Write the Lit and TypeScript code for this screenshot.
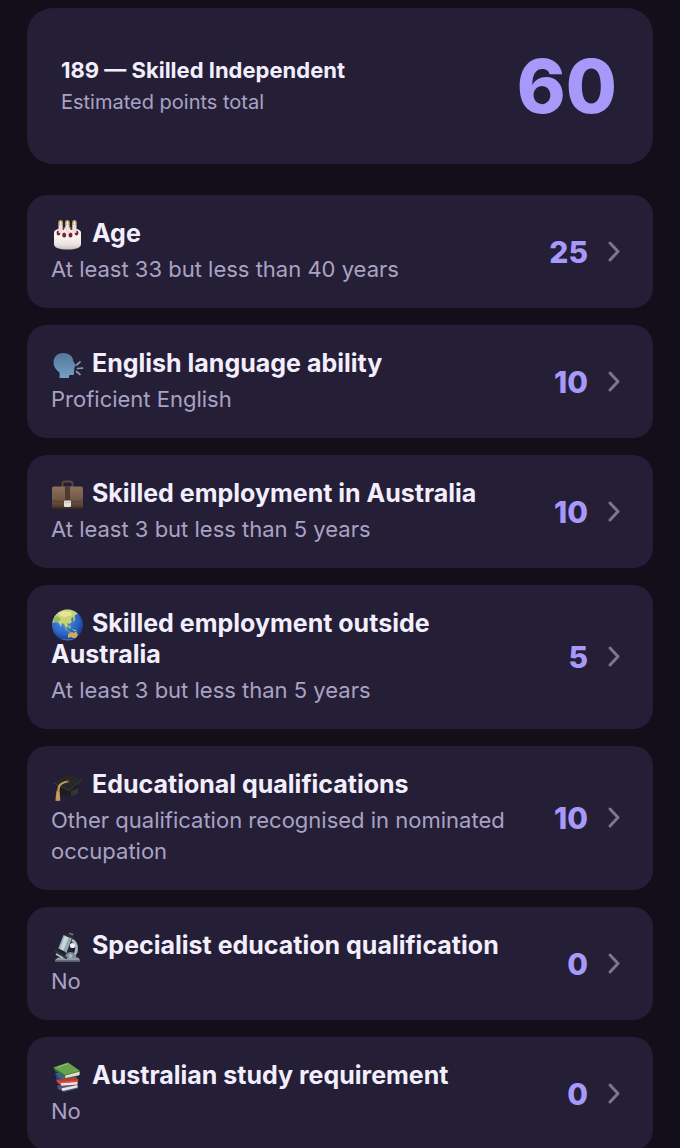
import { LitElement, html, css, svg } from "lit";
import type { SVGTemplateResult } from "lit";
import { customElement } from "lit/decorators.js";

interface Factor {
  icon: SVGTemplateResult;
  title: string;
  value: string;
  points: number;
}

const cake = svg`
  <defs>
    <linearGradient id="icing" x1="0" y1="0" x2="0" y2="1">
      <stop offset="0" stop-color="#fffdfb" /><stop offset="0.700" stop-color="#ebe5e0" /><stop offset="1" stop-color="#c9c0b8" />
    </linearGradient>
  </defs>
  <path d="M3 13v12c0 4 5.500 5.500 13.500 5.500S30 29 30 25V13z" fill="url(#icing)" />
  <ellipse cx="16.500" cy="13.500" rx="13.500" ry="5" fill="#f5eeea" />
  <g fill="#7a1f35">
    <circle cx="11.800" cy="9.500" r="1.600" /><circle cx="20.700" cy="9.500" r="1.600" />
    <ellipse cx="7.500" cy="14" rx="1.900" ry="2.400" /><ellipse cx="13.200" cy="16" rx="2" ry="2.500" />
    <ellipse cx="19.500" cy="16" rx="2" ry="2.500" /><ellipse cx="25.500" cy="14" rx="1.900" ry="2.400" />
  </g>
  <g fill="#ecdfd4"><rect x="7.500" y="3" width="4.200" height="11" rx="1" /><rect x="14.300" y="3" width="4.200" height="12" rx="1" /><rect x="21.300" y="3" width="4.200" height="11" rx="1" /></g>
  <g fill="#a89560"><rect x="7.300" y="1" width="4.600" height="5" rx="2" /><rect x="14.100" y="1" width="4.600" height="5" rx="2" /><rect x="21.100" y="1" width="4.600" height="5" rx="2" /></g>
  <g fill="#fff3b8"><ellipse cx="9.600" cy="4" rx="1.100" ry="2" /><ellipse cx="16.400" cy="4" rx="1.100" ry="2" /><ellipse cx="23.400" cy="4" rx="1.100" ry="2" /></g>`;

const speaking = svg`
  <defs>
    <linearGradient id="head" x1="0" y1="0" x2="0" y2="1">
      <stop offset="0" stop-color="#56779d" /><stop offset="1" stop-color="#759fc4" />
    </linearGradient>
  </defs>
  <path d="M12 4C6.500 4 2.500 8 2.500 13.500c0 4 2 7 5.500 9.500.8 1.200.8 3.500.5 6H18c0-1.500 0-2.500.7-3h2.800c1.500 0 2-1 1.600-2.500l-.3-1.300.9-1-.9-1.200 1.100-1-.5-1.300c1.400-.3 1.700-1 1-2l-2.200-3.700C22 7 18 4 12 4z" fill="url(#head)" />
  <g stroke="#8597ae" stroke-width="1.700" stroke-linecap="round"><path d="M25.500 16l3.500-3" /><path d="M26.500 19.500l5-.3" /><path d="M25.500 22.500l3.500 3" /></g>`;

const briefcase = svg`
  <defs>
    <linearGradient id="leather" x1="0" y1="0" x2="0" y2="1">
      <stop offset="0" stop-color="#8a705d" /><stop offset="0.550" stop-color="#745a47" /><stop offset="1" stop-color="#49362a" />
    </linearGradient>
  </defs>
  <path d="M11.500 8V4.500Q11.500 2.500 14 2.500h5q2.500 0 2.500 2V8" fill="none" stroke="#604839" stroke-width="1.800" />
  <rect x="1" y="7.500" width="31" height="22" rx="2" fill="url(#leather)" />
  <path d="M1.500 21.500q6 1.500 12 1.500h6q6 0 12-1.500" fill="none" stroke="#513b2d" stroke-width="0.800" />
  <rect x="14" y="7.500" width="5" height="15" fill="#513a2b" />
  <rect x="13" y="21.500" width="7" height="6.500" rx="1" fill="#e6dfd9" />
  <path d="M13.500 23.500h6" stroke="#c4b8ae" stroke-width="0.800" />
  <path d="M2 29h29" stroke="#34251d" />`;

const globe = svg`
  <defs>
    <radialGradient id="ocean" cx="0.400" cy="0.350" r="0.700">
      <stop offset="0" stop-color="#4f9be0" /><stop offset="0.650" stop-color="#2a62c5" /><stop offset="1" stop-color="#173280" />
    </radialGradient>
    <clipPath id="sphere"><circle cx="16.500" cy="16" r="15.500" /></clipPath>
  </defs>
  <circle cx="16.500" cy="16" r="15.500" fill="url(#ocean)" />
  <g clip-path="url(#sphere)">
    <path d="M4 5L12 0l10 0 5 5-3 1-1 3-2-1-1 3 1 2-3 2-2-1 1 3-2 2-2-4-2-1-1 4-2-4-3-1-4 1z" fill="#c8d474" />
    <path d="M8 4l5-2 7 1 1 3-6 2-6-1z" fill="#ece39a" />
    <path d="M2 10l4-3 4 3-3 3-4 0z" fill="#92b66a" />
    <path d="M13 18l3 2 1 2-2-1zM17 17l2-1 1 3-2 1zM21 20l4 1 1 1-3 0zM16 22l4 1-1 1z" fill="#9fbd65" />
    <path d="M22 7q2 0 2 4l-2 2q1-3 0-6z" fill="#c9cf7a" />
    <path d="M17 25l4-2 2 1 2-2 2 4-2 3-3 0-2-1-3 1z" fill="#cfa865" />
    <path d="M5 28q8 4 20 1l-7 4z" fill="#82b4e8" opacity="0.400" />
  </g>`;

const cap = svg`
  <path d="M9 16v8q8 5 17-1v-9z" fill="#1d1d1e" />
  <path d="M20 21l7-3v5q-3 3-7 3z" fill="#34333a" />
  <path d="M2.500 13L17 4l14 5.500L18 20.500z" fill="#272728" />
  <path d="M2.500 13L18 20.500 31 9.500" fill="none" stroke="#434244" stroke-width="0.800" />
  <path d="M17 11.500Q10 12.500 8 16.500l-1 6" fill="none" stroke="#c99a52" stroke-width="2.200" stroke-linecap="round" />
  <path d="M5.500 20.500h3l.8 10q-2.500 1.200-5 0z" fill="#c08b48" />
  <path d="M6.500 22l-.5 8M8 22v8" stroke="#e0b367" stroke-width="0.700" />
  <ellipse cx="17" cy="11.300" rx="1.500" ry="0.900" fill="#55524d" />`;

const microscope = svg`
  <path d="M4 29l3-2.500h20l2 2.500v1.500H4z" fill="#8e9da5" />
  <path d="M4 29.500h25" stroke="#53616a" stroke-width="0.800" />
  <path d="M21 9q5 3 4.500 9 0 5-4.500 7.500" fill="none" stroke="#a9b8bf" stroke-width="2.800" />
  <path d="M14 27q0-5.500 5.500-6 5.500.5 6 6z" fill="#7c8c95" /><circle cx="19.500" cy="25" r="2" fill="#a8b6bc" />
  <path d="M12.500 4l8.500 3-5.500 15-8.500-4z" fill="#93a9b2" />
  <path d="M13.500 5l4 1.500-5 13-3.500-1.500z" fill="#c5d5da" />
  <path d="M17 1l6.500 2-2 4.500-6-2z" fill="#2c3036" />
  <path d="M18.500 2.500l3.500 1" stroke="#9ba7ae" />
  <path d="M6.500 17l8 4-2 3.500-6.500-3z" fill="#20242a" />
  <path d="M4.500 19l12 7.500-1.200 1.700L3.500 21z" fill="#30363d" />
  <path d="M5 23l7 4" stroke="#b8c5cb" stroke-width="1.500" />
  <circle cx="21.500" cy="14.500" r="2.600" fill="#edf5f4" />`;

const books = svg`
  <path d="M6 24.500l18-2 3 2v3L13 31l-6-3z" fill="#485484" />
  <path d="M10.500 27.300l16-3.300v2.500L11.500 30z" fill="#e8e3df" />
  <path d="M4 12l18 0 4 4.500-17 2z" fill="#3b5d99" /><path d="M4 12l5 6v3l-3.500-3z" fill="#27477e" />
  <path d="M5.500 19l19-3 3 2.500-1 5-16 1.500-4-3z" fill="#b83c31" />
  <path d="M9.500 22.300l17-1.300v2.500l-16 1.300z" fill="#f0e4dc" />
  <path d="M5.500 19q2 2 5 2.500l16.500-1.500" fill="none" stroke="#e0644d" />
  <path d="M2.500 6.500L17 1.500l12 8.500-1 5-13 2L4 10z" fill="#396e35" />
  <path d="M2.500 6.500L17 1.500l12 8.500L14 14z" fill="#69a34e" />
  <path d="M14 14.800L28.500 10.800v3.200l-14 3z" fill="#f0eee2" />
  <path d="M14.500 16L28.200 12.500" stroke="#c6c5b8" stroke-width="0.600" />
  <path d="M6.500 6.300L16.500 2.900" stroke="#9aca74" stroke-width="0.800" />`;

const factors: Factor[] = [
  { icon: cake, title: "Age", value: "At least 33 but less than 40 years", points: 25 },
  { icon: speaking, title: "English language ability", value: "Proficient English", points: 10 },
  { icon: briefcase, title: "Skilled employment in Australia", value: "At least 3 but less than 5 years", points: 10 },
  { icon: globe, title: "Skilled employment outside Australia", value: "At least 3 but less than 5 years", points: 5 },
  { icon: cap, title: "Educational qualifications", value: "Other qualification recognised in nominated occupation", points: 10 },
  { icon: microscope, title: "Specialist education qualification", value: "No", points: 0 },
  { icon: books, title: "Australian study requirement", value: "No", points: 0 },
];

@customElement("app-root")
export class AppRoot extends LitElement {
  static styles = css`
    :host {
      display: block;
      min-height: 100vh;
      box-sizing: border-box;
      padding: 8px 27px 16px;
      background: #120f1a;
      color: #f3eefc;
      font-family: Inter, "Liberation Sans", sans-serif;
    }
    .summary {
      display: flex;
      align-items: center;
      justify-content: space-between;
      gap: 20px;
      padding: 33px 36px 33px 34px;
      border-radius: 26px;
      background: #241f37;
    }
    .visa {
      margin: 0;
      font-size: 22px;
      line-height: 32px;
      font-weight: 700;
    }
    .caption {
      margin: 0;
      font-size: 20px;
      line-height: 32px;
      color: #aaa2c3;
    }
    .total {
      font-size: 74px;
      line-height: 90px;
      font-weight: 800;
      color: #a699fa;
    }
    .factors {
      display: flex;
      flex-direction: column;
      gap: 17px;
      margin: 31px 0 0;
      padding: 0;
      list-style: none;
    }
    .factor {
      display: flex;
      align-items: center;
      width: 100%;
      box-sizing: border-box;
      padding: 23px 32px 23px 24px;
      border: 0;
      border-radius: 20px;
      background: #241f37;
      color: inherit;
      font: inherit;
      text-align: left;
      cursor: pointer;
    }
    .text {
      display: flex;
      flex: 1;
      flex-direction: column;
      gap: 5px;
      min-width: 0;
      margin-right: 32px;
    }
    .title {
      font-size: 25px;
      line-height: 31px;
      font-weight: 700;
    }
    .emoji {
      width: 33px;
      height: 33px;
      margin: -6px 8px -6px 0;
      vertical-align: middle;
    }
    .value {
      font-size: 22px;
      line-height: 31px;
      color: #aaa2c3;
    }
    .points {
      font-size: 30px;
      line-height: 36px;
      font-weight: 800;
      color: #a699fa;
    }
    .chevron {
      width: 14px;
      height: 24px;
      margin-left: 19px;
      fill: none;
      stroke: #7c778c;
      stroke-width: 3;
      stroke-linecap: round;
      stroke-linejoin: round;
    }
  `;

  render() {
    return html`
      <header class="summary">
        <div>
          <h1 class="visa">189 — Skilled Independent</h1>
          <p class="caption">Estimated points total</p>
        </div>
        <div class="total">60</div>
      </header>
      <ul class="factors">
        ${factors.map(
          (f) => html`
            <li>
              <button class="factor" type="button">
                <span class="text">
                  <span class="title"><svg class="emoji" viewBox="0 0 33 33" fill="none" aria-hidden="true">${f.icon}</svg>${f.title}</span>
                  <span class="value">${f.value}</span>
                </span>
                <span class="points">${f.points}</span>
                <svg class="chevron" viewBox="0 0 14 24" aria-hidden="true"><path d="M3 3L11 11.500l-8 8.500" /></svg>
              </button>
            </li>
          `,
        )}
      </ul>
    `;
  }
}
